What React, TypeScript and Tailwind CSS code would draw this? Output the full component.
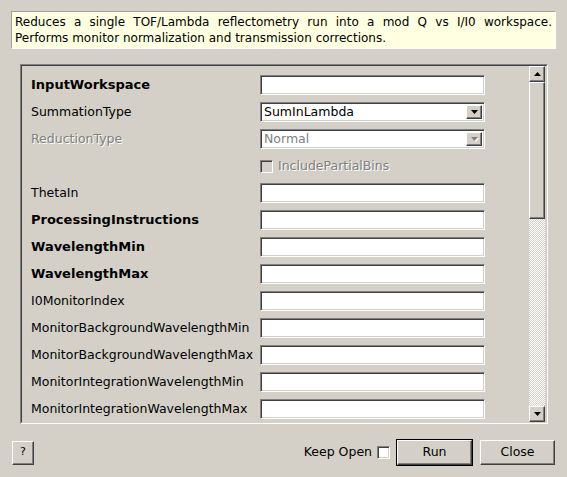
type Field = {
  label: string;
  kind: 'text' | 'combo' | 'check';
  bold?: boolean;
  disabled?: boolean;
  value?: string;
};

const fields: Field[] = [
  { label: 'InputWorkspace', kind: 'text', bold: true },
  { label: 'SummationType', kind: 'combo', value: 'SumInLambda' },
  { label: 'ReductionType', kind: 'combo', value: 'Normal', disabled: true },
  { label: 'IncludePartialBins', kind: 'check', disabled: true },
  { label: 'ThetaIn', kind: 'text' },
  { label: 'ProcessingInstructions', kind: 'text', bold: true },
  { label: 'WavelengthMin', kind: 'text', bold: true },
  { label: 'WavelengthMax', kind: 'text', bold: true },
  { label: 'I0MonitorIndex', kind: 'text' },
  { label: 'MonitorBackgroundWavelengthMin', kind: 'text' },
  { label: 'MonitorBackgroundWavelengthMax', kind: 'text' },
  { label: 'MonitorIntegrationWavelengthMin', kind: 'text' },
  { label: 'MonitorIntegrationWavelengthMax', kind: 'text' },
];

const sunken =
  'border border-t-[#808080] border-l-[#808080] border-r-white border-b-white shadow-[inset_1px_1px_0_#404040,inset_-1px_-1px_0_#d4d0c8]';
const raised =
  'border border-t-white border-l-white border-r-[#404040] border-b-[#404040] shadow-[inset_-1px_-1px_0_#808080]';

function Arrow({ up, disabled }: { up?: boolean; disabled?: boolean }) {
  return (
    <svg width="7" height="4" viewBox="0 0 7 4" className="overflow-visible">
      {disabled && (
        <polygon points={up ? '4.5,1 8,4 1,4' : '1,1 8,1 4.5,5'} fill="#ffffff" />
      )}
      <polygon
        points={up ? '3.5,0 7,4 0,4' : '0,0 7,0 3.5,4'}
        fill={disabled ? '#808080' : '#000000'}
      />
    </svg>
  );
}

function Combo({ value, disabled }: { value?: string; disabled?: boolean }) {
  return (
    <div className={`flex h-[20px] w-[225px] items-stretch bg-white p-[2px] ${sunken}`}>
      <div
        className={`flex flex-1 items-center pl-[1px] leading-none ${disabled ? 'text-[#808080]' : 'text-black'}`}
      >
        {value}
      </div>
      <div className={`flex w-[16px] items-center justify-center bg-[#d4d0c8] ${raised}`}>
        <Arrow disabled={disabled} />
      </div>
    </div>
  );
}

function ScrollBar() {
  return (
    <div className="flex w-[16px] flex-col">
      <div className={`flex h-[16px] items-center justify-center bg-[#d4d0c8] ${raised}`}>
        <Arrow up />
      </div>
      <div className={`h-[137px] bg-[#d4d0c8] ${raised}`} />
      <div className="flex-1 bg-[repeating-conic-gradient(#d4d0c8_0_25%,#ffffff_0_50%)] bg-[length:2px_2px]" />
      <div className={`flex h-[16px] items-center justify-center bg-[#d4d0c8] ${raised}`}>
        <Arrow />
      </div>
    </div>
  );
}

export default function App() {
  return (
    <div className="flex h-[477px] w-[567px] flex-col bg-[#d4d0c8] font-['DejaVu_Sans',sans-serif] text-[12.5px] text-black">
      <div className="mx-[11px] mt-[11px] h-[38px] border border-t-[#a0a0a0] border-l-[#a0a0a0] border-r-white border-b-white bg-[#ffffe1] px-[3px] pt-[2px] text-justify text-[12px] leading-[16px]">
        Reduces a single TOF/Lambda reflectometry run into a mod Q vs I/I0 workspace. Performs
        monitor normalization and transmission corrections.
      </div>

      <div className="ml-[20px] mt-[15px] flex h-[360px] w-[528px] border border-t-[#808080] border-l-[#808080] border-r-white border-b-white">
        <div className="flex flex-1 border border-t-[#404040] border-l-[#404040] border-r-[#d4d0c8] border-b-[#d4d0c8]">
          <div className="flex flex-1 flex-col gap-[7px] pl-[9px] pt-[9px]">
            {fields.map((f) => (
              <div key={f.label} className="flex h-[20px] items-center">
                <div
                  className={`w-[229px] ${f.bold ? 'text-[13px] font-bold' : ''} ${
                    f.disabled && f.kind !== 'check'
                      ? 'text-[#808080] [text-shadow:1px_1px_0_#ffffff]'
                      : ''
                  }`}
                >
                  {f.kind === 'check' ? '' : f.label}
                </div>
                {f.kind === 'text' && <div className={`h-[20px] w-[225px] bg-white ${sunken}`} />}
                {f.kind === 'combo' && <Combo value={f.value} disabled={f.disabled} />}
                {f.kind === 'check' && (
                  <div className="flex items-center gap-[5px]">
                    <div className={`h-[13px] w-[13px] bg-[#d4d0c8] ${sunken}`} />
                    <span className="text-[#808080] [text-shadow:1px_1px_0_#ffffff]">{f.label}</span>
                  </div>
                )}
              </div>
            ))}
          </div>
          <div className="mr-[1px] flex">
            <ScrollBar />
          </div>
        </div>
      </div>

      <div className="mt-[15px] flex items-center px-[12px]">
        <button className={`flex h-[24px] w-[22px] items-center justify-center bg-[#d4d0c8] text-[11px] ${raised}`}>
          ?
        </button>
        <div className="flex-1" />
        <span className="mr-[5px]">Keep Open</span>
        <div className={`h-[13px] w-[13px] bg-white ${sunken}`} />
        <div className="ml-[6px] border border-black">
          <button className={`flex h-[25px] w-[75px] items-center justify-center bg-[#d4d0c8] ${raised}`}>
            Run
          </button>
        </div>
        <button className={`ml-[7px] flex h-[25px] w-[75px] items-center justify-center bg-[#d4d0c8] ${raised}`}>
          Close
        </button>
      </div>
    </div>
  );
}
